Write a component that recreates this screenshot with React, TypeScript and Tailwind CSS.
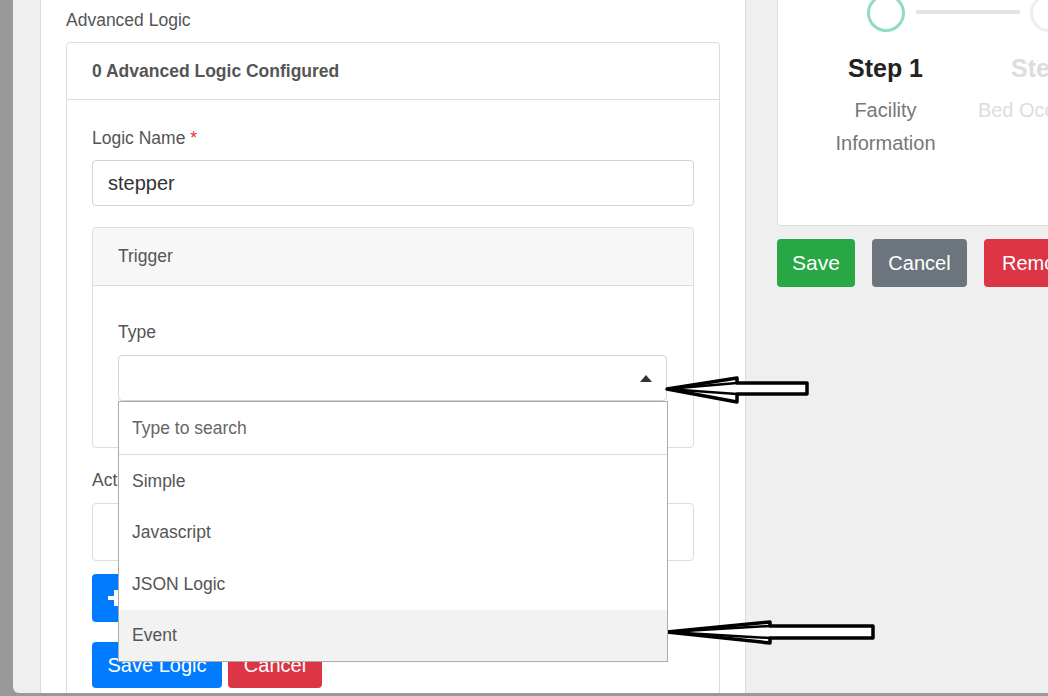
import React from 'react';

const options = ['Simple', 'Javascript', 'JSON Logic', 'Event'];

const Arrows: React.FC = () => (
  <svg className="absolute top-0 left-0 pointer-events-none" width="1048" height="696" viewBox="0 0 1048 696">
    {/* arrow pointing at the select */}
    <g fill="white" stroke="black" strokeWidth="3.5" strokeLinejoin="round">
      <polygon points="667,389 737,378 737,383 807,383 807,394 737,394 737,402" />
      <polyline points="667,389 737,383" fill="none" strokeWidth="2.5" />
      <polyline points="667,389 737,394" fill="none" strokeWidth="2.5" />
    </g>
    {/* arrow pointing at the Event option */}
    <g fill="white" stroke="black" strokeWidth="3.5" strokeLinejoin="round">
      <polygon points="667,632 770,622 770,626 873,626 873,638 770,638 770,643" />
      <polyline points="667,632 770,626" fill="none" strokeWidth="2.5" />
      <polyline points="667,632 770,638" fill="none" strokeWidth="2.5" />
    </g>
  </svg>
);

const TypeSelect: React.FC = () => (
  <div className="relative">
    <div className="h-[46px] border border-[#ced4da] rounded-[4px] bg-white flex items-center justify-end pr-[14px]">
      <svg width="12" height="7" viewBox="0 0 12 7">
        <path d="M0 7 L6 0 L12 7 Z" fill="#333" />
      </svg>
    </div>
    <div className="absolute top-[46px] left-0 w-[550px] bg-white border border-[#aaa] z-10">
      <div className="h-[53px] flex items-center px-[13px] border-b border-[#ddd] text-[17.5px] text-[#666]">
        Type to search
      </div>
      {options.map(opt => (
        <div
          key={opt}
          className={`h-[51.5px] flex items-center px-[13px] text-[17.5px] text-[#555] ${opt === 'Event' ? 'bg-[#f2f2f2]' : 'bg-white'}`}
        >
          {opt}
        </div>
      ))}
    </div>
  </div>
);

const LogicPanel: React.FC = () => (
  <div className="ml-[27px] w-[706px] shrink-0 h-full bg-white border-x border-[#ddd] pl-[25px] pt-[8px] overflow-hidden">
    <div className="text-[17.5px] leading-6 text-[#555]">Advanced Logic</div>

    <div className="mt-[10px] w-[654px] border border-[#ddd] rounded-[4px]">
      <div className="h-[57px] flex items-center px-[25px] border-b border-[#ddd] text-[17.5px] font-bold text-[#555]">
        0 Advanced Logic Configured
      </div>

      <div className="px-[25px] pt-[26px] pb-[40px]">
        <div className="text-[17.5px] leading-6 text-[#555]">
          Logic Name <span className="text-[#e3342f]">*</span>
        </div>
        <div className="mt-[10px] h-[46px] border border-[#ced4da] rounded-[4px] flex items-center px-[15px] text-[20px] text-[#333]">
          stepper
        </div>

        <div className="mt-[21px] border border-[#ddd] rounded-[4px]">
          <div className="h-[58px] bg-[#f7f7f7] border-b border-[#ddd] rounded-t-[4px] flex items-center px-[25px] text-[17.5px] text-[#555]">
            Trigger
          </div>
          <div className="pl-[25px] pr-[26px] pt-[34px] pb-[46px]">
            <div className="text-[17.5px] leading-6 text-[#555] mb-[11px]">Type</div>
            <TypeSelect />
          </div>
        </div>

        <div className="mt-[20px] text-[17.5px] leading-6 text-[#555]">Actions</div>
        <div className="mt-[11px] h-[58px] border border-[#ddd] rounded-[4px]"></div>

        <button className="mt-[13px] h-[48px] px-[16px] rounded-[4px] bg-[#007bff] text-white text-[20px] flex items-center gap-[8px]">
          <svg width="16" height="16" viewBox="0 0 16 16">
            <path d="M6 0h4v6h6v4h-6v6H6v-6H0V6h6z" fill="white" />
          </svg>
          Add Action
        </button>

        <div className="mt-[20px] flex gap-[6px]">
          <button className="h-[46px] w-[130px] rounded-[4px] bg-[#007bff] text-white text-[20px]">Save Logic</button>
          <button className="h-[46px] w-[94px] rounded-[4px] bg-[#dc3545] text-white text-[20px]">Cancel</button>
        </div>
      </div>
    </div>
  </div>
);

const StepperCard: React.FC = () => (
  <div className="w-[300px]">
    <div className="h-[226px] bg-white border border-[#ddd] border-t-0 rounded-b-[4px] pl-[26px] overflow-hidden">
      <div className="flex">
        <div className="w-[163px] flex flex-col items-center shrink-0">
          <div className="relative w-full flex justify-center -mt-[6px]">
            <div className="w-[38px] h-[38px] rounded-full border-[3px] border-[#8fdcc4] bg-white"></div>
            <div className="absolute left-[112px] top-[16px] w-[104px] h-[4px] bg-[#e3e3e3]"></div>
          </div>
          <div className="mt-[22px] text-[25px] leading-7 font-bold text-[#222]">Step 1</div>
          <div className="mt-[12px] px-[14px] text-center text-[20px] leading-[33px] text-[#777]">
            Facility Information
          </div>
        </div>
        <div className="w-[163px] flex flex-col items-center shrink-0">
          <div className="flex justify-center -mt-[6px]">
            <div className="w-[38px] h-[38px] rounded-full border-[3px] border-[#eee] bg-white"></div>
          </div>
          <div className="mt-[22px] text-[25px] leading-7 font-bold text-[#ddd] whitespace-nowrap">Step 2</div>
          <div className="mt-[12px] text-center text-[20px] leading-[33px] text-[#ddd] whitespace-nowrap">
            Bed Occupancy
          </div>
        </div>
      </div>
    </div>
    <div className="mt-[13px] flex gap-[17px] whitespace-nowrap">
      <button className="h-[48px] w-[78px] shrink-0 rounded-[4px] bg-[#28a745] text-white text-[21px]">Save</button>
      <button className="h-[48px] w-[95px] shrink-0 rounded-[4px] bg-[#6c757d] text-white text-[20px]">Cancel</button>
      <button className="h-[48px] w-[100px] shrink-0 rounded-[4px] bg-[#dc3545] text-white text-[20px] text-left pl-[18px]">Remove</button>
    </div>
  </div>
);

export default function App() {
  return (
    <div className="relative w-[1048px] h-[696px] overflow-hidden bg-[#999] font-['Liberation_Sans',Arial,sans-serif]">
      <div className="ml-[13px] h-[693px] bg-[#efefef] rounded-bl-[6px] flex overflow-hidden">
        <LogicPanel />
        <div className="ml-[31px] shrink-0">
          <StepperCard />
        </div>
      </div>
      <Arrows />
    </div>
  );
}
